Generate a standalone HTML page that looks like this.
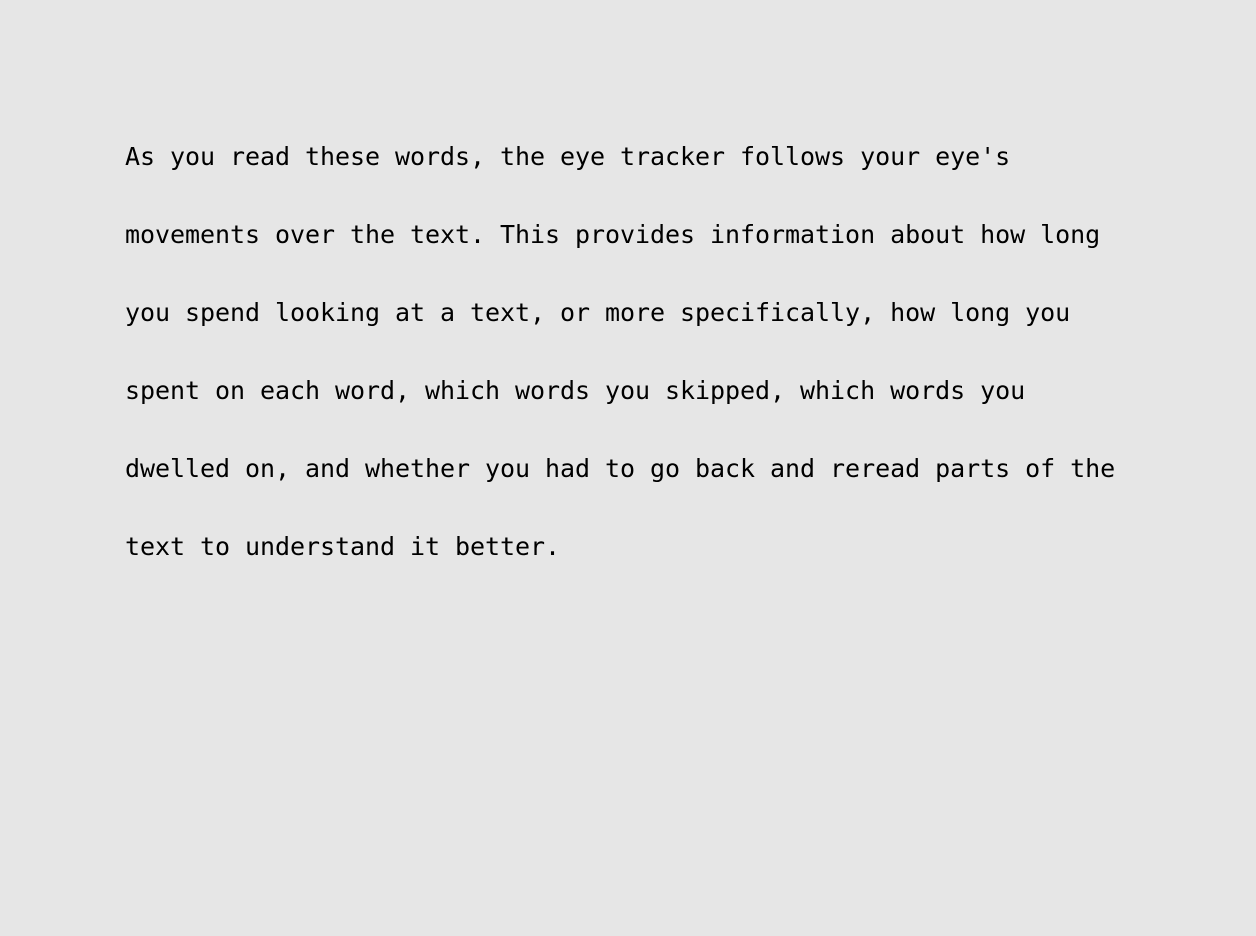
<!DOCTYPE html>
<html><head><meta charset="utf-8"><style>
html,body{margin:0;padding:0;background:#e6e6e6;width:1256px;height:936px;overflow:hidden}
.t{position:absolute;left:125px;top:118px;font-family:"DejaVu Sans Mono","Liberation Mono",monospace;font-size:25px;letter-spacing:-0.05px;line-height:78px;color:#000;white-space:pre}
</style></head><body>
<div class="t">As you read these words, the eye tracker follows your eye's
movements over the text. This provides information about how long
you spend looking at a text, or more specifically, how long you
spent on each word, which words you skipped, which words you
dwelled on, and whether you had to go back and reread parts of the
text to understand it better.</div>
</body></html>
